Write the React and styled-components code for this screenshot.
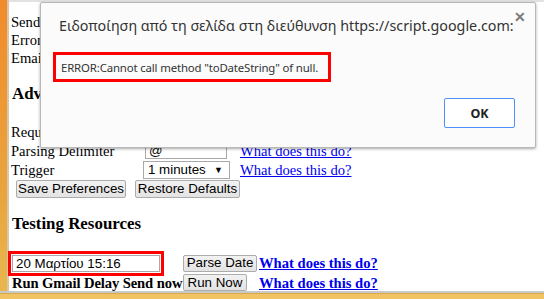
import React from 'react';
import styled, { createGlobalStyle } from 'styled-components';

const GlobalStyle = createGlobalStyle`
  html, body {
    margin: 0;
    padding: 0;
    background: #fff;
  }
  body {
    width: 544px;
    height: 299px;
    overflow: hidden;
  }
`;

const Frame = styled.div`
  position: relative;
  width: 544px;
  height: 299px;
  display: flex;
  flex-direction: column;
  overflow: hidden;
`;

const Main = styled.div`
  display: flex;
  height: 291px;
  overflow: hidden;
`;

const LeftStrip = styled.div`
  width: 7px;
  flex: none;
  background: linear-gradient(to bottom, #f18b2b, #e8a640 70%, #e9b64e);
  border-right: 2px solid #d7c7a8;
`;

const Page = styled.div`
  flex: 1;
  border-top: 2px solid #e2e2e2;
  padding: 11px 0 0 2px;
  font-family: 'Liberation Serif', 'Times New Roman', serif;
  font-size: 14.6px;
  color: #000;
`;

const Line = styled.div`
  line-height: 18px;
  white-space: nowrap;
`;

const Heading = styled.h3`
  margin: ${(p) => p.$top}px 0 0 1px;
  font-size: 16.9px;
  line-height: 22px;
  font-weight: bold;
`;

const FormTable = styled.div`
  display: grid;
  grid-template-columns: 132px 97px auto;
  grid-auto-rows: 19px;
  align-items: center;
  margin-top: 17px;
  white-space: nowrap;
  line-height: 18px;
`;

const TextBox = styled.input`
  box-sizing: border-box;
  width: ${(p) => p.$w}px;
  height: 17px;
  margin: 0 0 0 ${(p) => p.$ml || 0}px;
  padding: 0 3px;
  border: 1px solid #a9a9a9;
  font-family: 'Liberation Sans', Arial, sans-serif;
  font-size: 13.33px;
  color: #000;
  background: #fff;
  outline: ${(p) => (p.$marked ? '3px solid #f00' : 'none')};
  outline-offset: 1px;
`;

const Select = styled.div`
  box-sizing: border-box;
  width: 87px;
  height: 18px;
  border: 1px solid #a9a9a9;
  display: flex;
  align-items: center;
  justify-content: space-between;
  padding: 0 6px 0 4px;
  font-family: 'Liberation Sans', Arial, sans-serif;
  font-size: 13.33px;
  background: #fff;
  span:last-child {
    font-size: 9px;
  }
`;

const Link = styled.a`
  color: #0000ee;
  text-decoration: underline;
  font-weight: ${(p) => (p.$bold ? 'bold' : 'normal')};
  cursor: pointer;
`;

const ButtonRow = styled.div`
  display: flex;
  gap: 9px;
  padding-left: 5px;
  margin-top: 1px;
`;

const Btn = styled.button`
  box-sizing: border-box;
  height: ${(p) => p.$h || 18}px;
  width: ${(p) => p.$w}px;
  padding: 0;
  border: 1px solid #acacac;
  border-radius: 2px;
  background: linear-gradient(to bottom, #f2f2f2, #e3e3e3);
  font-family: 'Liberation Sans', Arial, sans-serif;
  font-size: 13.33px;
  color: #000;
  line-height: 14px;
`;

const TestGrid = styled.div`
  display: grid;
  grid-template-columns: 171px 76px auto;
  grid-template-rows: 20px 19px;
  align-items: center;
  margin-top: 18px;
  padding-left: 1px;
  white-space: nowrap;
  line-height: 18px;
`;

const BoldLabel = styled.span`
  font-weight: bold;
  letter-spacing: -0.1px;
`;

const BottomLine = styled.div`
  height: 2px;
  background: #c9c9c9;
`;

const BottomBand = styled.div`
  flex: 1;
  background: #f1c363;
  border-top: 1px solid #d9a84a;
`;

/* alert dialog on top of the page */
const Dialog = styled.div`
  position: absolute;
  left: 40px;
  top: 2px;
  width: 496px;
  height: 146px;
  box-sizing: border-box;
  background: #fbfbfb;
  border: 1px solid #b8b8b8;
  border-radius: 2px;
  box-shadow: 0 1px 3px rgba(0, 0, 0, 0.35);
  font-family: 'Noto Sans', 'Open Sans', sans-serif;
  color: #333;
`;

const Title = styled.div`
  position: absolute;
  left: 18px;
  top: 13px;
  font-size: 14.3px;
  white-space: nowrap;
`;

const Close = styled.div`
  position: absolute;
  right: 9px;
  top: 6px;
  font-size: 14px;
  font-weight: bold;
  color: #7a7a7a;
  font-family: 'Liberation Sans', Arial, sans-serif;
`;

const Message = styled.div`
  position: absolute;
  left: 12px;
  top: 49px;
  width: 278px;
  height: 30px;
  box-sizing: border-box;
  border: 3px solid #f00;
  padding-left: 5px;
  display: flex;
  align-items: center;
  font-size: 11.4px;
  letter-spacing: -0.15px;
  white-space: nowrap;
`;

const OkButton = styled.button`
  position: absolute;
  left: 403px;
  top: 95px;
  width: 71px;
  height: 30px;
  box-sizing: border-box;
  border: 1px solid #4d90fe;
  border-radius: 2px;
  background: #fff;
  font-family: 'Noto Sans', 'Open Sans', sans-serif;
  font-weight: bold;
  font-size: 12.5px;
  color: #222;
`;

export default function App() {
  return (
    <Frame>
      <GlobalStyle />
      <Main>
        <LeftStrip />
        <Page>
          <Line>Send</Line>
          <Line>Error</Line>
          <Line>Email</Line>
          <Heading $top={16}>Advanced</Heading>
          <FormTable>
            <span>Require Label</span>
            <span />
            <span />
            <span>Parsing Delimiter</span>
            <TextBox $w={82} $ml={2} defaultValue="@" />
            <Link>What does this do?</Link>
            <span>Trigger</span>
            <Select>
              <span>1 minutes</span>
              <span>▼</span>
            </Select>
            <Link>What does this do?</Link>
          </FormTable>
          <ButtonRow>
            <Btn $w={110}>Save Preferences</Btn>
            <Btn $w={105}>Restore Defaults</Btn>
          </ButtonRow>
          <Heading $top={15}>Testing Resources</Heading>
          <TestGrid>
            <TextBox $w={148} $marked defaultValue="20 Μαρτίου 15:16" />
            <Btn $w={74} $h={17}>Parse Date</Btn>
            <Link $bold>What does this do?</Link>
            <BoldLabel>Run Gmail Delay Send now</BoldLabel>
            <Btn $w={64} $h={17}>Run Now</Btn>
            <Link $bold>What does this do?</Link>
          </TestGrid>
        </Page>
      </Main>
      <BottomLine />
      <BottomBand />
      <Dialog>
        <Title>Ειδοποίηση από τη σελίδα στη διεύθυνση https://script.google.com:</Title>
        <Close>✕</Close>
        <Message>ERROR:Cannot call method "toDateString" of null.</Message>
        <OkButton>OK</OkButton>
      </Dialog>
    </Frame>
  );
}
